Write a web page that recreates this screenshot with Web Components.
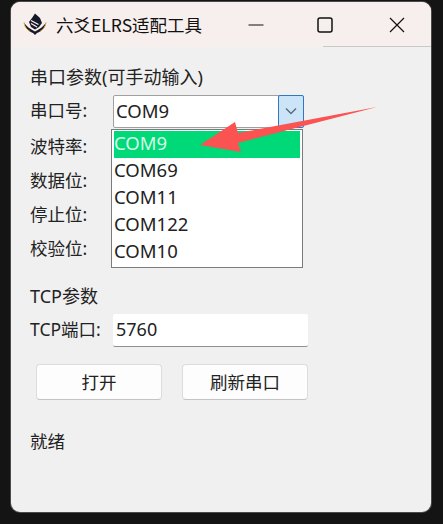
<!DOCTYPE html>
<html lang="zh">
<head>
<meta charset="utf-8">
<title>六爻ELRS适配工具</title>
<style>
  html, body { margin: 0; height: 100%; background: #141414; overflow: hidden; }
  body { font-family: "Noto Sans", "Noto Sans CJK SC", sans-serif; color: #222; }
</style>
</head>
<body>
<app-window>
  <title-bar slot="title">六爻ELRS适配工具</title-bar>
  <section-label>串口参数(可手动输入)</section-label>
  <form-row class="first" label="串口号:"><combo-box value="COM9"></combo-box></form-row>
  <form-row class="second" label="波特率:"></form-row>
  <form-row label="数据位:"></form-row>
  <form-row label="停止位:"></form-row>
  <form-row label="校验位:"></form-row>
  <section-label class="tcp">TCP参数</section-label>
  <form-row class="first" label="TCP端口:"><text-field value="5760"></text-field></form-row>
  <button-row>
    <push-button>打开</push-button>
    <push-button>刷新串口</push-button>
  </button-row>
  <status-text>就绪</status-text>
  <drop-list slot="overlay" selected="COM9" items="COM9,COM69,COM11,COM122,COM10"></drop-list>
  <red-arrow slot="overlay"></red-arrow>
</app-window>

<script>
class AppWindow extends HTMLElement {
  constructor() {
    super();
    this.attachShadow({ mode: 'open' });
    this.shadowRoot.innerHTML = `
      <style>
        :host {
          display: flex;
          flex-direction: column;
          position: absolute;
          left: 11px;
          top: 2px;
          width: 420px;
          height: 510px;
          background: #f0f0f0;
          border-radius: 9px;
          box-shadow: 0 0 0 1px #4a4a4a;
          overflow: hidden;
        }
        .content {
          display: flex;
          flex-direction: column;
          padding: 19px 0 0 19px;
        }
      </style>
      <slot name="title"></slot>
      <div class="content"><slot></slot></div>
      <slot name="overlay"></slot>
    `;
  }
}

class TitleBar extends HTMLElement {
  constructor() {
    super();
    this.attachShadow({ mode: 'open' });
    this.shadowRoot.innerHTML = `
      <style>
        :host {
          display: flex;
          align-items: center;
          height: 45px;
          flex: none;
          background: #f7efed;
          position: relative;
          color: #111;
          font-size: 17.5px;
        }
        .logo { width: 24px; height: 24px; margin-left: 12px; flex: none; }
        .name { margin-left: 9px; flex: 1; white-space: nowrap; font-family: "Noto Sans CJK SC", sans-serif; }
        .ctl { height: 45px; display: flex; align-items: center; justify-content: center; flex: none; }
        .rule { position: absolute; left: 312px; right: 0; bottom: 0; height: 1px; background: #c9c9c9; }
      </style>
      <svg class="logo" viewBox="0 0 24 24">
        <path d="M12 0.5 L17 5 L19 10 L16 14 L12 16.5 L8 14 L6 9 L9 5 Z" fill="#17172b"/>
        <path d="M8 7.5 L15.5 11.5 M8 10.5 L14 14" stroke="#f7efed" stroke-width="1.3" fill="none"/>
        <path d="M1 9.5 C2 15 5 18 10 20 L12 22 L14 20 C19 18 22 15 23 9.5 C21 13 17 16 12 18.5 C7 16 3 13 1 9.5 Z" fill="#17172b"/>
        <path d="M1 9.5 C1.5 14 4 16.5 7 18.5 M23 9.5 C22.5 14 20 16.5 17 18.5" stroke="#d8a93a" stroke-width="1" fill="none"/>
      </svg>
      <span class="name"><slot></slot></span>
      <div class="ctl" style="width:62px"><svg width="16" height="16" viewBox="0 0 16 16"><path d="M0.5 8H15.5" stroke="#111" stroke-width="1.2"/></svg></div>
      <div class="ctl" style="width:76px"><svg width="16" height="16" viewBox="0 0 16 16"><rect x="1" y="1" width="14" height="14" rx="2" fill="none" stroke="#111" stroke-width="1.5"/></svg></div>
      <div class="ctl" style="width:68px"><svg width="16" height="16" viewBox="0 0 16 16"><path d="M1 1L15 15M15 1L1 15" stroke="#111" stroke-width="1.2"/></svg></div>
      <div class="rule"></div>
    `;
  }
}

class SectionLabel extends HTMLElement {
  constructor() {
    super();
    this.attachShadow({ mode: 'open' });
    this.shadowRoot.innerHTML = `
      <style>
        :host {
          display: block;
          height: 22px;
          line-height: 22px;
          font-size: 18px;
          white-space: nowrap;
        }
        :host(.tcp) { margin-top: 19px; }
      </style>
      <slot></slot>
    `;
  }
}

class FormRow extends HTMLElement {
  constructor() {
    super();
    this.attachShadow({ mode: 'open' });
    this.shadowRoot.innerHTML = `
      <style>
        :host {
          display: flex;
          align-items: center;
          height: 34px;
          font-size: 17.5px;
          white-space: nowrap;
        }
        :host(.first) { margin-top: 6px; }
        :host(.second) { margin-top: 2px; }
        .label { width: 83px; flex: none; padding-bottom: 3px; }
      </style>
      <span class="label">${this.getAttribute('label') || ''}</span>
      <slot></slot>
    `;
  }
}

class ComboBox extends HTMLElement {
  constructor() {
    super();
    this.attachShadow({ mode: 'open' });
    this.shadowRoot.innerHTML = `
      <style>
        :host {
          display: flex;
          width: 191px;
          height: 33px;
          box-sizing: border-box;
          background: #fff;
          border: 1px solid #a0a0a0;
          border-radius: 2px;
          font-size: 18.5px;
        }
        .value { flex: 1; padding-left: 2px; line-height: 29px; }
        .btn {
          width: 24px;
          margin: -1px;
          display: flex;
          align-items: center;
          justify-content: center;
          background: #cce4f7;
          border: 1px solid #2f78c4;
          border-radius: 2px;
        }
      </style>
      <span class="value">${this.getAttribute('value') || ''}</span>
      <span class="btn">
        <svg width="12" height="8" viewBox="0 0 12 8"><path d="M1 1.5L6 6.5L11 1.5" fill="none" stroke="#5f6a75" stroke-width="1.4"/></svg>
      </span>
    `;
  }
}

class TextField extends HTMLElement {
  constructor() {
    super();
    this.attachShadow({ mode: 'open' });
    this.shadowRoot.innerHTML = `
      <style>
        :host {
          display: block;
          width: 195px;
          height: 33px;
          box-sizing: border-box;
          background: #fff;
          border-bottom: 1px solid #8f8f8f;
          border-radius: 2px;
          padding-left: 3px;
          line-height: 31px;
          font-size: 18px;
        }
      </style>
      ${this.getAttribute('value') || ''}
    `;
  }
}

class ButtonRow extends HTMLElement {
  constructor() {
    super();
    this.attachShadow({ mode: 'open' });
    this.shadowRoot.innerHTML = `
      <style>
        :host { display: flex; gap: 20px; margin: 17px 0 0 6px; }
      </style>
      <slot></slot>
    `;
  }
}

class PushButton extends HTMLElement {
  constructor() {
    super();
    this.attachShadow({ mode: 'open' });
    this.shadowRoot.innerHTML = `
      <style>
        :host {
          display: flex;
          align-items: center;
          justify-content: center;
          width: 126px;
          height: 36px;
          box-sizing: border-box;
          padding-bottom: 2px;
          background: #fdfdfd;
          border: 1px solid #dcdcdc;
          border-bottom-color: #c4c4c4;
          border-radius: 4px;
          font-size: 17.5px;
        }
      </style>
      <slot></slot>
    `;
  }
}

class StatusText extends HTMLElement {
  constructor() {
    super();
    this.attachShadow({ mode: 'open' });
    this.shadowRoot.innerHTML = `
      <style>
        :host { display: block; margin-top: 30px; font-size: 17.5px; line-height: 22px; }
      </style>
      <slot></slot>
    `;
  }
}

class DropList extends HTMLElement {
  constructor() {
    super();
    this.attachShadow({ mode: 'open' });
    const selected = this.getAttribute('selected');
    const rows = (this.getAttribute('items') || '').split(',').map(item =>
      `<div class="item ${item === selected ? 'on' : ''}">${item}</div>`).join('');
    this.shadowRoot.innerHTML = `
      <style>
        :host {
          position: absolute;
          left: 100px;
          top: 127px;
          width: 192px;
          height: 139px;
          box-sizing: border-box;
          background: #fff;
          border: 1px solid #7b7b7b;
          padding: 1px 2px;
          font-size: 18.5px;
        }
        .item { height: 27px; line-height: 24px; color: #222; }
        .on { background: #00d977; color: #d8fbe8; }
      </style>
      ${rows}
    `;
  }
}

class RedArrow extends HTMLElement {
  constructor() {
    super();
    this.attachShadow({ mode: 'open' });
    this.shadowRoot.innerHTML = `
      <style>
        :host { position: absolute; left: 180px; top: 90px; width: 200px; height: 70px; pointer-events: none; }
      </style>
      <svg width="200" height="70" viewBox="0 0 200 70">
        <path d="M9 53 L44 30 L47 41 L186 15 L47 51 L50 60 Z" fill="#fb5252"/>
      </svg>
    `;
  }
}

customElements.define('app-window', AppWindow);
customElements.define('title-bar', TitleBar);
customElements.define('section-label', SectionLabel);
customElements.define('form-row', FormRow);
customElements.define('combo-box', ComboBox);
customElements.define('text-field', TextField);
customElements.define('button-row', ButtonRow);
customElements.define('push-button', PushButton);
customElements.define('status-text', StatusText);
customElements.define('drop-list', DropList);
customElements.define('red-arrow', RedArrow);
</script>
</body>
</html>
